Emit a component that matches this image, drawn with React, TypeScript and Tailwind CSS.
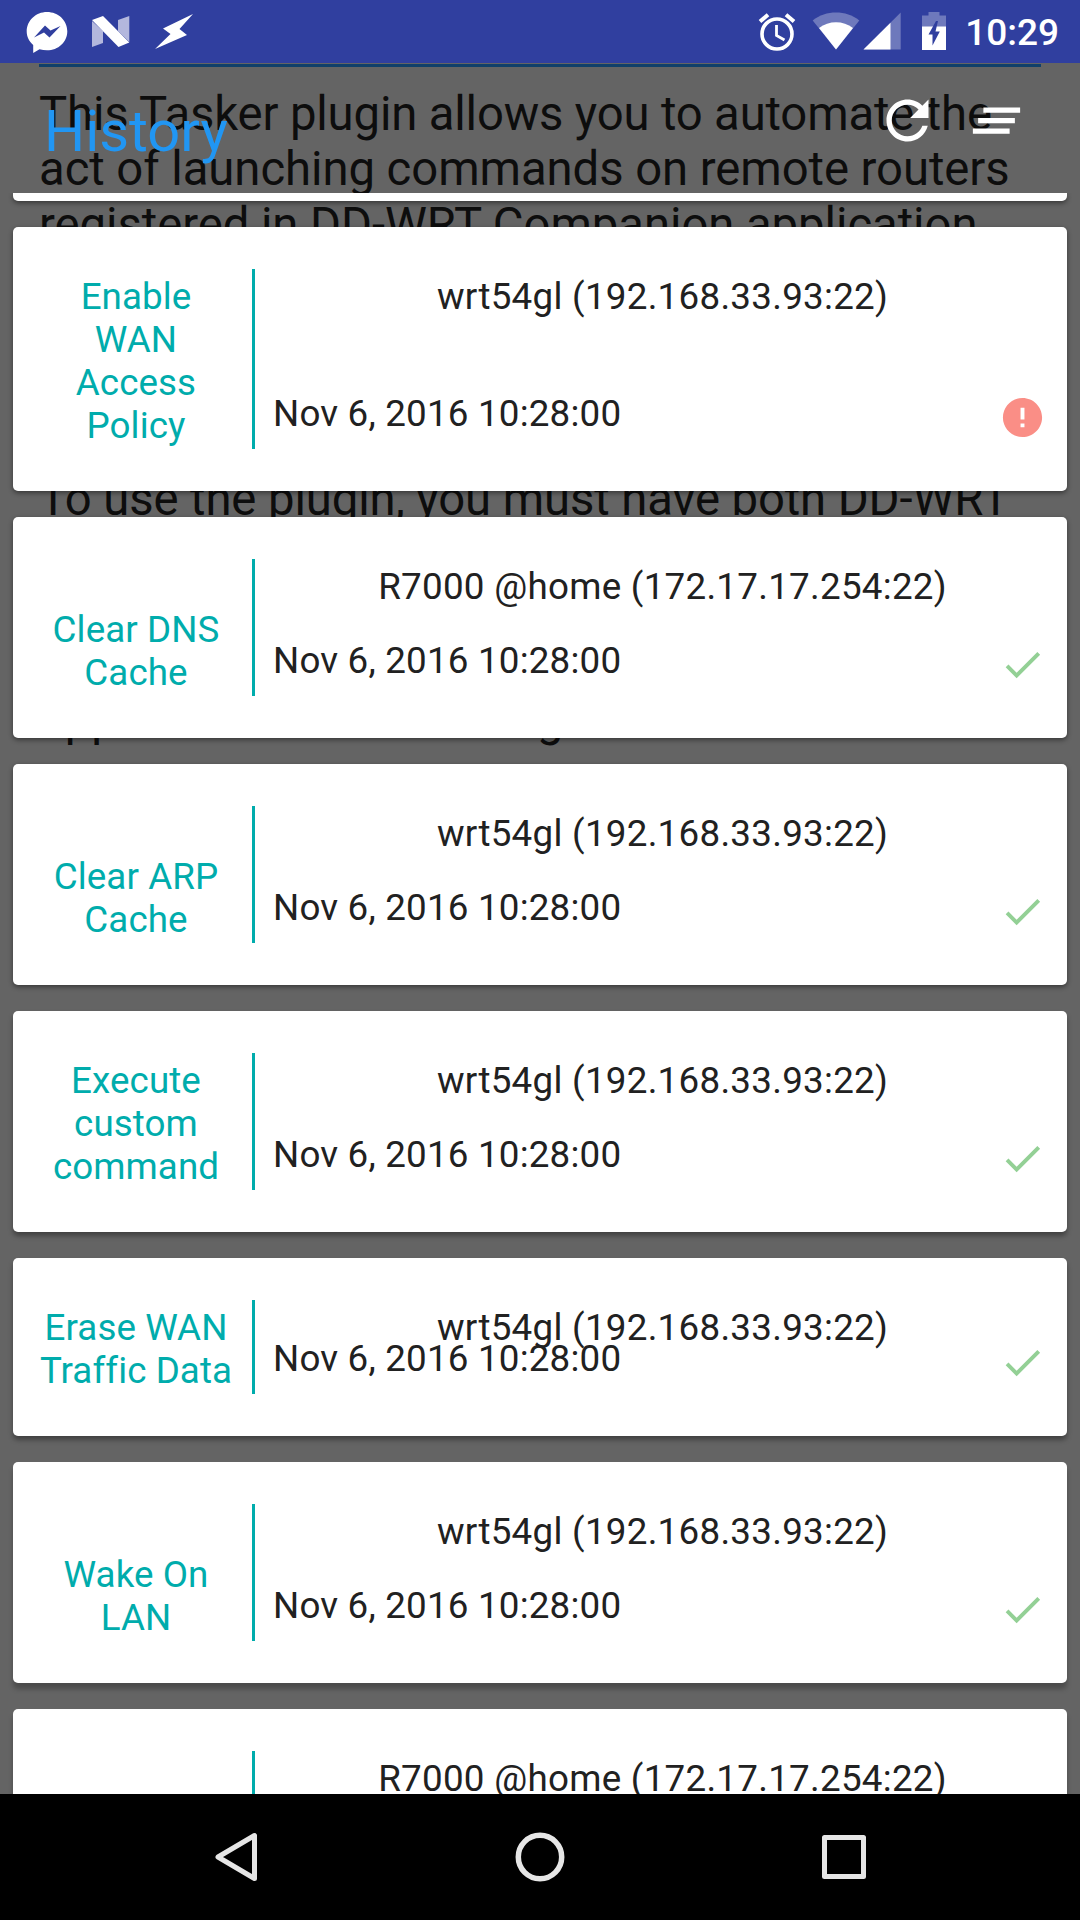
import React from "react";

type Entry = {
  lines: string[];
  router: string;
  height: string;
  ok: boolean;
  shadow: string;
};

const DATE = "Nov 6, 2016 10:28:00";
const WRT = "wrt54gl (192.168.33.93:22)";
const R7000 = "R7000 @home (172.17.17.254:22)";

const LIGHT = "shadow-[0_2px_5px_rgba(0,0,0,0.45)]";
const MEDIUM = "shadow-[0_4px_5px_rgba(0,0,0,0.35)]";
const DEEP = "shadow-[0_6px_5px_rgba(0,0,0,0.25)]";

const entries: Entry[] = [
  { lines: ["Enable", "WAN", "Access", "Policy"], router: WRT, height: "h-[264px]", ok: false, shadow: LIGHT },
  { lines: ["", "Clear DNS", "Cache"], router: R7000, height: "h-[221px]", ok: true, shadow: LIGHT },
  { lines: ["", "Clear ARP", "Cache"], router: WRT, height: "h-[221px]", ok: true, shadow: LIGHT },
  { lines: ["Execute", "custom", "command"], router: WRT, height: "h-[221px]", ok: true, shadow: MEDIUM },
  { lines: ["Erase WAN", "Traffic Data"], router: WRT, height: "h-[178px]", ok: true, shadow: MEDIUM },
  { lines: ["", "Wake On", "LAN"], router: WRT, height: "h-[221px]", ok: true, shadow: DEEP },
  { lines: ["", "", ""], router: R7000, height: "h-[221px]", ok: true, shadow: DEEP },
];

function StatusBar() {
  return (
    <header className="flex h-[63px] items-center bg-[#303f9f] text-white">
      <svg className="ml-[26px] h-[63px] w-[42px] shrink-0" viewBox="26 0 42 63" fill="none">
        <path
          d="M47 12C35.700 12 26.700 20.600 26.700 31.500C26.700 36.500 29 41.500 33.200 45V53L39.500 49.300C42 50 44.500 50.300 47 50.300C58.300 50.300 67.300 42 67.300 31.200C67.300 20.500 58.300 12 47 12Z"
          fill="#fff"
        />
        <path d="M34 37.500L45 25.500L50.500 30.500L60.500 26L49.500 37.500L44 32.500Z" fill="#303f9f" />
      </svg>
      <svg className="ml-[23px] h-[63px] w-[40px] shrink-0" viewBox="91 0 40 63">
        <path d="M92 21L103 31V43L92 47Z M118 20L129.300 16V42L118 31Z" fill="#b3b7dd" />
        <path d="M92 20L103 16L129.300 42.500L118.500 47Z" fill="#fff" />
      </svg>
      <svg className="ml-[23px] h-[63px] w-[42px] shrink-0 blur-[0.7px]" viewBox="154 0 42 63">
        <path d="M193 14L163 28.500L170.500 34L155 49L187 35L179.500 29Z" fill="#fff" />
      </svg>
      <svg className="ml-auto h-[63px] w-[38px] shrink-0" viewBox="758 0 38 63" fill="none" stroke="#fff">
        <circle cx="777" cy="34" r="15" strokeWidth="3.600" />
        <path d="M776.500 25V35.500L784.500 40" strokeWidth="2.800" />
        <path d="M760 21.500L768 14.800M794 21.500L786 14.800" strokeWidth="4" />
      </svg>
      <svg className="ml-[16px] h-[63px] w-[48px] shrink-0" viewBox="812 0 48 63">
        <path d="M812.700 20.500C826 9.900 846 9.900 859.300 20.500L836 49.500Z" fill="#fff" fillOpacity=".3" />
        <path d="M819 28C829 20.200 843 20.200 853 28L836 49.500Z" fill="#fff" />
      </svg>
      <svg className="ml-[3px] h-[63px] w-[38px] shrink-0" viewBox="863 0 38 63">
        <path d="M863.500 49.500L900.700 12.500V49.500Z" fill="#fff" fillOpacity=".3" />
        <path d="M863.500 49.500L890.500 22.700V49.500Z" fill="#fff" />
      </svg>
      <svg className="ml-[20px] h-[63px] w-[26px] shrink-0" viewBox="921 0 26 63">
        <path d="M922 15.500H928.500V12H939.500V15.500H946V27H922Z" fill="#fff" fillOpacity=".3" />
        <path d="M922 26.500H946V50H922Z" fill="#fff" />
        <path d="M936 21L928.500 34.500H932.500V45.500L939.800 31.500H935.500L938 21Z" fill="#303f9f" />
      </svg>
      <span className="mt-[2px] mr-[21px] ml-[18px] text-[37px] leading-[43px] font-medium">10:29</span>
    </header>
  );
}

function Backdrop() {
  return (
    <div className="absolute inset-0 px-[39px] pt-px text-[47.250px] leading-[55.400px] whitespace-pre text-[#0d0d0d]">
      <div className="h-[3px] bg-[#10406a]" />
      <p className="pt-[20px]">
        <span className="tracking-[-0.160px]">This Tasker plugin allows you to automate the</span>
        <br />
        <span className="tracking-[-0.060px]">act of launching commands on remote routers</span>
        <br />
        <span className="tracking-[-0.060px]">registered in DD-WRT Companion application.</span>
      </p>
      <p className="pt-[218.500px] tracking-[-0.100px]">
        To use the plugin, you must have both DD-WRT
      </p>
      <p className="flex pt-[165px]">
        <span className="w-[498px]">application and Tasker</span>
        <span>g</span>
      </p>
    </div>
  );
}

function Toolbar() {
  return (
    <div className="flex h-[130px] shrink-0 items-start pl-[44px]">
      <h1 className="mt-[34px] text-[57.750px] leading-[68px] text-[#2196f3]">History</h1>
      <svg className="mt-[26px] ml-auto size-[63px]" viewBox="0 0 24 24" fill="#fff">
        <path d="M17.650 6.350C16.200 4.900 14.210 4 12 4c-4.420 0-7.990 3.580-7.990 8s3.570 8 7.990 8c3.730 0 6.840-2.550 7.730-6h-2.080c-.820 2.330-3.040 4-5.650 4-3.310 0-6-2.690-6-6s2.690-6 6-6c1.660 0 3.140.690 4.220 1.780L13 11h7V4l-2.350 2.350z" />
      </svg>
      <svg className="mt-[26px] mr-[52px] ml-[26px] size-[63px]" viewBox="0 0 24 24" fill="#fff">
        <path d="M5 13h14v-2H5v2zm-2 4h14v-2H3v2zM7 7v2h14V7H7z" />
      </svg>
    </div>
  );
}

function StatusIcon({ ok }: { ok: boolean }) {
  return (
    <svg className="mb-[8px] size-[47px]" viewBox="0 0 24 24" fill={ok ? "#93d095" : "#fa8e86"}>
      {ok ? (
        <path d="M9 16.170L4.830 12l-1.420 1.410L9 19 21 7l-1.410-1.410z" />
      ) : (
        <path d="M12 2C6.480 2 2 6.480 2 12s4.480 10 10 10 10-4.480 10-10S17.520 2 12 2zm1 15h-2v-2h2v2zm0-4h-2V7h2v6z" />
      )}
    </svg>
  );
}

function Card({ entry }: { entry: Entry }) {
  return (
    <article
      className={`flex shrink-0 rounded-[5px] bg-white py-[42px] text-[36.750px] leading-[43px] whitespace-nowrap text-[#212121] ${entry.height} ${entry.shadow}`}
    >
      <div className="ml-[26px] w-[194px] pt-[6px] text-center tracking-[0.080px] text-[#00acac]">
        {entry.lines.map((line, i) => (
          <div key={i} className="h-[43px]">
            {line}
          </div>
        ))}
      </div>
      <div className="ml-[19px] w-[3px] bg-[#00acac]" />
      <div className="grid flex-1 pt-[6px]">
        <div className="col-start-1 row-start-1 self-start pl-[3px] text-center tracking-[0.270px]">{entry.router}</div>
        <div className="col-start-1 row-start-1 flex items-end justify-between self-end pr-[21px] pl-[18px]">
          <span className="mb-[14px] tracking-[0.200px]">{DATE}</span>
          <StatusIcon ok={entry.ok} />
        </div>
      </div>
    </article>
  );
}

function NavBar() {
  return (
    <nav className="flex h-[126px] items-center justify-between bg-black px-[204px]">
      <svg className="size-[64px]" viewBox="0 0 64 64" fill="none" stroke="#e6e6e6" strokeWidth="5" strokeLinejoin="round">
        <path d="M50.500 10.500V53.500L14 32Z" />
      </svg>
      <svg className="size-[64px]" viewBox="0 0 64 64" fill="none" stroke="#e6e6e6" strokeWidth="5.500">
        <circle cx="32" cy="32" r="21.700" />
      </svg>
      <svg className="size-[64px]" viewBox="0 0 64 64" fill="none" stroke="#e6e6e6" strokeWidth="5" strokeLinejoin="round">
        <rect x="12.500" y="12.500" width="39" height="39" />
      </svg>
    </nav>
  );
}

export default function App() {
  return (
    <div className="h-[1920px] w-[1080px] overflow-hidden bg-black font-['Roboto',sans-serif]">
      <StatusBar />
      <main className="relative h-[1731px] overflow-hidden bg-[#646464]">
        <Backdrop />
        <div className="relative flex h-full flex-col">
          <Toolbar />
          <section className="flex flex-1 flex-col gap-[26px] overflow-hidden px-[13px]">
            <div className="h-[8px] shrink-0 rounded-b-[5px] bg-white shadow-[0_2px_5px_rgba(0,0,0,0.45)]" />
            {entries.map((entry, i) => (
              <Card key={i} entry={entry} />
            ))}
          </section>
        </div>
      </main>
      <NavBar />
    </div>
  );
}
